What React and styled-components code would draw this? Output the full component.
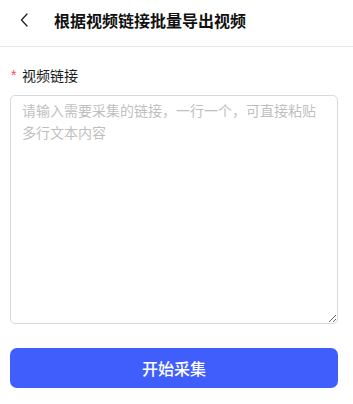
import React, { useState } from 'react';
import styled, { createGlobalStyle } from 'styled-components';

const GlobalStyle = createGlobalStyle`
  * {
    box-sizing: border-box;
  }

  body {
    margin: 0;
    background: #ffffff;
    font-family: "Noto Sans CJK SC", "Noto Sans", sans-serif;
    color: #1f1f1f;
  }
`;

const Page = styled.div`
  width: 100%;
  min-height: 404px;
  background: #ffffff;
`;

const NavBar = styled.div`
  height: 47px;
  display: flex;
  align-items: center;
  padding: 0 0 7px 20px;
  border-bottom: 1px solid #e5e5e5;
`;

const BackButton = styled.button`
  width: 34px;
  height: 24px;
  padding: 0;
  margin: 0;
  border: none;
  background: none;
  display: flex;
  align-items: center;
  cursor: pointer;
`;

const Title = styled.h1`
  margin: 0;
  font-size: 16px;
  font-weight: 700;
  line-height: 22px;
  color: #111111;
`;

const Form = styled.div`
  padding: 16px 15px 0 10px;
  display: flex;
  flex-direction: column;
`;

const Label = styled.label`
  display: flex;
  align-items: center;
  height: 24px;
  font-size: 14px;
  color: #1a1a1a;
  margin-bottom: 8px;
`;

const Required = styled.span`
  color: #ff4d4f;
  font-size: 14px;
  width: 12px;
  padding-left: 1px;
  font-family: "Liberation Sans", sans-serif;
`;

const TextArea = styled.textarea`
  width: 100%;
  height: 229px;
  padding: 3px 11px;
  border: 1px solid #d9d9d9;
  border-radius: 5px;
  font-family: "Noto Sans CJK SC", sans-serif;
  font-size: 14px;
  line-height: 22px;
  color: #222222;
  outline: none;
  resize: vertical;

  &::placeholder {
    color: #bfbfbf;
  }
`;

const SubmitButton = styled.button`
  margin-top: 24px;
  width: 100%;
  height: 40px;
  border: none;
  border-radius: 7px;
  background: #3f5efb;
  color: #ffffff;
  font-family: "Noto Sans CJK SC", sans-serif;
  font-size: 16px;
  font-weight: 500;
  cursor: pointer;
`;

const ChevronLeft = () => (
  <svg width="8" height="14" viewBox="0 0 8 14" fill="none">
    <path d="M7 1 L1.5 7 L7 13" stroke="#222" strokeWidth="1.3" strokeLinecap="round" strokeLinejoin="round" />
  </svg>
);

const App = () => {
  const [links, setLinks] = useState('');

  return (
    <Page>
      <GlobalStyle />
      <NavBar>
        <BackButton>
          <ChevronLeft />
        </BackButton>
        <Title>根据视频链接批量导出视频</Title>
      </NavBar>
      <Form>
        <Label>
          <Required>*</Required>
          视频链接
        </Label>
        <TextArea
          value={links}
          onChange={(e) => setLinks(e.target.value)}
          placeholder="请输入需要采集的链接，一行一个，可直接粘贴多行文本内容"
        />
        <SubmitButton>开始采集</SubmitButton>
      </Form>
    </Page>
  );
};

export default App;
